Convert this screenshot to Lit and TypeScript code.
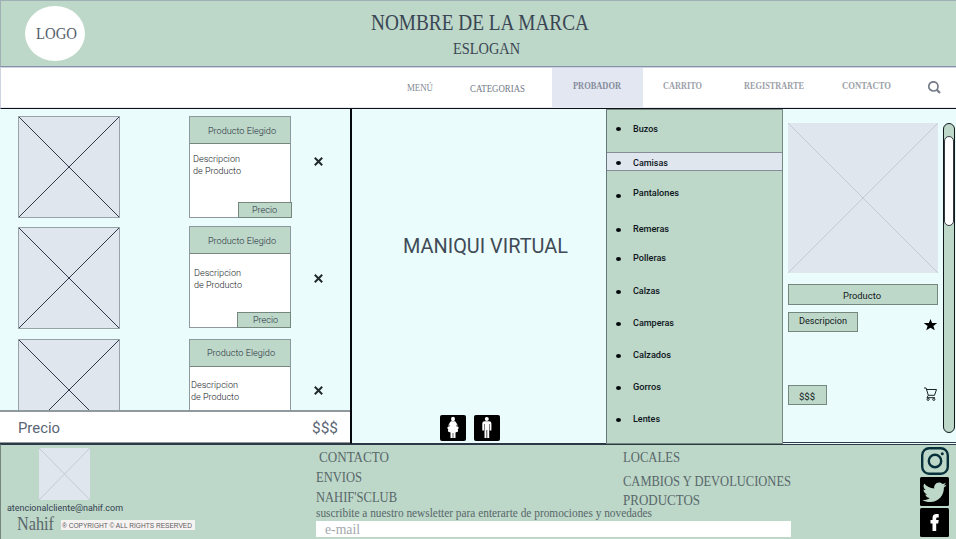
import { LitElement, html, css, svg, nothing } from "lit";
import { customElement, property } from "lit/decorators.js";
import { classMap } from "lit/directives/class-map.js";

/** A single line of text condensed or widened to a given width. */
@customElement("fit-label")
class FitLabel extends LitElement {
  @property({ type: Number }) w = 0;
  static styles = css`
    :host { display: block; flex: none; white-space: nowrap; }
    span { display: inline-block; transform-origin: 0 50%; }
  `;
  render() {
    return html`<span><slot></slot></span>`;
  }
  firstUpdated() {
    this.style.width = `${this.w}px`;
    const span = this.renderRoot.querySelector("span") as HTMLElement;
    const natural = span.getBoundingClientRect().width;
    if (natural) span.style.transform = `scaleX(${this.w / natural})`;
  }
}

/** Crossed placeholder picture. */
@customElement("image-slot")
class ImageSlot extends LitElement {
  static styles = css`
    :host { display: block; box-sizing: border-box; background: #dfe6ee; color: #2e3848; }
    svg { display: block; width: 100%; height: 100%; }
    line { stroke: currentColor; stroke-width: 1; vector-effect: non-scaling-stroke; }
  `;
  render() {
    return html`<svg viewBox="0 0 100 100" preserveAspectRatio="none">
      <line x1="0" y1="0" x2="100" y2="100"></line>
      <line x1="100" y1="0" x2="0" y2="100"></line>
    </svg>`;
  }
}

const nav = [
  { text: "MENÚ", w: 26, cls: "menu" },
  { text: "CATEGORIAS", w: 55, cls: "cats" },
  { text: "PROBADOR", w: 48, cls: "tab" },
  { text: "CARRITO", w: 39, cls: "cart" },
  { text: "REGISTRARTE", w: 60, cls: "reg" },
  { text: "CONTACTO", w: 49, cls: "contact" },
];

const categories = [
  ["Buzos", 25], ["Camisas", 35], ["Pantalones", 46], ["Remeras", 36], ["Polleras", 33],
  ["Calzas", 27], ["Camperas", 41], ["Calzados", 38], ["Gorros", 28], ["Lentes", 27],
] as const;

const search = svg`<circle cx="5.4" cy="5.4" r="4.6" fill="none" stroke="#737c88" stroke-width="1.7"/><path d="M8.7 8.8L12 12" stroke="#737c88" stroke-width="2.2"/>`;

@customElement("app-root")
class AppRoot extends LitElement {
  static styles = css`
    :host {
      display: flex; flex-direction: column; width: 956px; height: 539px; overflow: hidden;
      font-family: "Roboto", sans-serif; color: #2f3b49; background: #fff;
    }
    * { box-sizing: border-box; }
    svg { display: block; flex: none; }
    .serif { font-family: "Liberation Serif", serif; }

    header {
      height: 67px; flex: none; display: grid; grid-template-columns: 370px 218px 1fr;
      background: #bdd7c8; border-top: 1px solid #9fb0b4; border-bottom: 1px solid #8593a8;
      border-left: 1px solid #9fb0b4;
    }
    .logo {
      width: 60px; height: 55px; margin: 5px 0 0 24px; border-radius: 50%; background: #fff;
      display: flex; align-items: center; justify-content: center; font-size: 16px; padding-left: 2px;
      color: #555e6b;
    }
    .brand { padding-top: 8px; color: #3a4654; }
    .brand .name { font-size: 22.5px; line-height: 27px; }
    .brand .slogan { font-size: 16.5px; line-height: 24px; margin: 1px 0 0 82px; }

    nav {
      height: 42px; flex: none; display: flex; align-items: flex-start; padding-left: 406px;
      border-top: 1px solid #cdd3e0; border-left: 1px solid #cdd3e0; border-bottom: 1px solid #0c1018;
      background: linear-gradient(#fff 39px, #e8eaf1 39px);
      font-size: 11px; line-height: 16px; color: #858c96;
    }
    .navitem { padding-top: 9px; }
    .navitem.menu { padding-top: 11px; }
    .navitem.cats { padding-top: 12px; margin-left: 37px; color: #727986; }
    .navitem.tab {
      margin-left: 27px; width: 91px; height: 39px; background: #e3e7f1; padding-left: 21px;
      font-weight: bold; color: #858c9c;
    }
    .navitem.cart { margin-left: 20px; font-weight: bold; color: #9ba0a8; }
    .navitem.reg { margin-left: 42px; font-weight: bold; color: #9ba0a8; }
    .navitem.contact { margin-left: 38px; font-weight: bold; color: #9ba0a8; }
    .search { margin: 13px 0 0 37px; }

    main { height: 335px; flex: none; display: grid; grid-template-columns: 352px 254px 177px 173px; background: #eafcfb; }

    .chosen { border-right: 2px solid #05080c; border-bottom: 1px solid #2d3846; height: 335px; display: flex; flex-direction: column; }
    .items { height: 301px; overflow: hidden; padding-left: 18px; }
    .item { display: flex; align-items: flex-start; height: 102px; margin-top: 9px; }
    .item.first { margin-top: 7px; }
    .item.last { margin-top: 10px; }
    .item image-slot { width: 102px; height: 102px; border: 1px solid #97a3a8; }
    .card { width: 102px; height: 102px; margin-left: 69px; background: #fff; border: 1px solid #8d989f; font-size: 9.5px; }
    .second .card { margin-top: -1px; }
    .cardhead { height: 27px; background: #bdd7c8; border-bottom: 1px solid #75877f; padding: 6px 0 0 18px; line-height: 15px; }
    .last .cardhead { padding: 5px 0 0 17px; }
    .desc { height: 58px; padding: 9px 0 0 3px; line-height: 12px; font-weight: 300; color: #111820; }
    .second .desc { padding: 13px 0 0 4px; }
    .last .desc { padding: 12px 0 0 1px; }
    .price { width: 54px; height: 16px; margin-left: 47px; background: #bdd7c8; border: 1px solid #75877f; padding-left: 15px; line-height: 14px; }
    .first .price { margin-left: 48px; padding-left: 13px; }
    .cardhead, .price { font-weight: 300; color: #242e3c; }
    .close { margin: 41px 0 0 23px; }
    .second .close, .last .close { margin-top: 47px; }
    .total {
      height: 33px; background: #fff; border-top: 2px solid #8f9a9e; border-bottom: 1px solid #8f9a9e;
      display: flex; justify-content: space-between; padding: 0 12px 0 18px; font-size: 15.5px; line-height: 32px; color: #5a6575;
    }

    .mannequin { height: 335px; border-bottom: 1px solid #2d3846; display: flex; flex-direction: column; align-items: center; }
    .mannequin .title { margin: 124px 0 0 12px; font-size: 20px; line-height: 26px; color: #3f4a57; }
    .figures { display: flex; gap: 8px; margin: 156px 0 0 -18px; }

    .categories {
      height: 335px; background: #bdd7c8; border: 1px solid #75877f; border-left: 1px solid #66767b; padding-top: 9px;
      display: grid; grid-template-rows: 33px 31.5px 36px 29px 33px 32px 32px 32px 32px 19px;
      font-size: 9px; font-weight: 500; color: #0d141b;
    }
    .category { height: 19px; display: flex; align-items: center; padding-left: 9px; line-height: 19px; }
    .category:first-child fit-label, .category.active fit-label { margin-top: 2px; }
    .category.active { background: #dfe6ee; border: solid #858d98; border-width: 1px 0; padding-top: 1px; }
    .dot { width: 5px; height: 4px; border-radius: 50%; background: #05080c; margin: 1px 12px 0 0; }
    .category.low .dot { margin-top: 5px; }

    .detail { display: grid; grid-template-columns: 150px 13px; column-gap: 5px; padding: 14px 0 0 5px; border-bottom: 1px solid #343c4a; height: 334px; }
    .detail { align-items: start; font-size: 9.5px; color: #111820; }
    .detail image-slot { width: 150px; height: 150px; color: #c3cbd9; }
    .tag { background: #bdd7c8; border: 1px solid #75877f; }
    .product { height: 21px; margin-top: 11px; padding-left: 54px; line-height: 21px; }
    .row { display: flex; justify-content: space-between; align-items: flex-start; }
    .description { width: 70px; height: 20px; margin-top: 7px; padding-left: 10px; line-height: 16px; }
    .star { margin: 14px 0 0; }
    .cost { width: 39px; height: 20px; margin-top: 53px; padding-left: 10px; line-height: 21px; }
    .trolley { margin-top: 55px; }
    .scroll { width: 12px; height: 310px; border: 1px solid #10181c; border-radius: 6px; background: #bdd7c8; padding-top: 12px; }
    .thumb { width: 10px; height: 90px; border: 1px solid #353a42; border-radius: 5px; background: #fff; }

    footer {
      height: 95px; flex: none; background: #bdd7c8; border-top: 1px solid #2d3846; border-left: 1px solid #75877f;
      display: grid; grid-template-columns: 315px 306px 298px 36px; color: #58676a;
    }
    .about image-slot { width: 51px; height: 52px; margin: 3px 0 0 38px; color: #c3cbd9; border-radius: 2px; }
    .mail { margin: 2px 0 0 6px; font-size: 9.5px; line-height: 12px; color: #344150; }
    .legal { display: flex; align-items: center; margin: 1px 0 0 16px; }
    .owner { font-size: 18px; line-height: 18px; }
    .rights { margin: 2px 0 0 7px; width: 134px; height: 10px; padding-left: 1px; background: #f6f4f3; font-family: "Liberation Sans", sans-serif; font-size: 7px; line-height: 11px; color: #5f5a60; }
    .links { font-size: 14px; line-height: 20px; padding-top: 3px; }
    .links .indent { margin-left: 3px; }
    .links.right { display: grid; grid-template-rows: 24px 19px 20px; align-content: start; padding-left: 1px; }
    .news { font-size: 11.5px; line-height: 12px; margin-top: -1px; }
    .field { width: 475px; height: 16px; margin-top: 2px; padding-left: 9px; background: #fff; color: #a2a8ac; font-size: 14.5px; line-height: 17px; }
    .social { display: flex; flex-direction: column; gap: 2px; padding-top: 1px; }
  `;

  private item(cls: string) {
    return html`<div class="item ${cls}">
      <image-slot></image-slot>
      <div class="card">
        <div class="cardhead"><fit-label w="68">Producto Elegido</fit-label></div>
        <div class="desc"><fit-label w="47">Descripcion</fit-label><fit-label w="48">de Producto</fit-label></div>
        ${cls === "last" ? nothing : html`<div class="price"><fit-label w="25">Precio</fit-label></div>`}
      </div>
      <svg class="close" width="9" height="9" viewBox="0 0 9 9"><path d="M.8 .8L8.2 8.2M8.2 .8L.8 8.2" stroke="#20292e" stroke-width="2"/></svg>
    </div>`;
  }

  render() {
    return html`
      <header class="serif">
        <div class="logo"><fit-label w="41">LOGO</fit-label></div>
        <div class="brand">
          <fit-label class="name" w="218">NOMBRE DE LA MARCA</fit-label>
          <fit-label class="slogan" w="67">ESLOGAN</fit-label>
        </div>
      </header>
      <nav class="serif">
        ${nav.map((n) => html`<div class="navitem ${n.cls}"><fit-label w=${n.w}>${n.text}</fit-label></div>`)}
        <svg class="search" width="13" height="13" viewBox="0 0 13 13">${search}</svg>
      </nav>
      <main>
        <section class="chosen">
          <div class="items">${["first", "second", "last"].map((c) => this.item(c))}</div>
          <div class="total"><fit-label w="42">Precio</fit-label><fit-label w="26">$$$</fit-label></div>
        </section>
        <section class="mannequin">
          <fit-label class="title" w="165">MANIQUI VIRTUAL</fit-label>
          <div class="figures">
            <svg width="26" height="26" viewBox="0 0 26 26"><rect width="26" height="26" rx="2"/><g fill="#fff"><ellipse cx="13" cy="4" rx="2" ry="2.2"/><path d="M10.800 6.200h4.400l2 3 .4 2 1.200 1.600-1 1.800 .3 1.900-2.600 1V23h-5V17.500l-2.600-1 .3-1.900-1-1.800 1.200-1.600.4-2Z"/></g><path d="M9.500 9.800l-.8 2.200M16.500 9.800l.8 2.200M13 18v5" stroke="#000" stroke-width=".6"/></svg>
            <svg width="26" height="26" viewBox="0 0 26 26"><rect width="26" height="26" rx="2"/><g fill="#fff"><circle cx="12.800" cy="3.900" r="2"/><path d="M10.500 6.300h4.600q2.300 0 2.300 2.300v7h-1.700V9h-.5v14h-2v-8h-.7v8h-2V9H10v6.600H8.300v-7q0-2.300 2.200-2.300Z"/></g></svg>
          </div>
        </section>
        <section class="categories">
          ${categories.map(
            ([name, w], i) => html`<div class=${classMap({ category: true, active: i === 1, low: i === 2 })}>
              <span class="dot"></span><fit-label w=${w}>${name}</fit-label>
            </div>`
          )}
        </section>
        <section class="detail">
          <div>
            <image-slot></image-slot>
            <div class="tag product"><fit-label w="38">Producto</fit-label></div>
            <div class="row">
              <div class="tag description"><fit-label w="48">Descripcion</fit-label></div>
              <svg class="star" width="14" height="12" viewBox="0 0 14 12"><path d="M6.500 0L8.100 4.100H13.200L9.400 7 10.800 11.200 6.500 8.700 2.200 11.200 3.600 7-.2 4.100H4.900Z"/></svg>
            </div>
            <div class="row">
              <div class="tag cost"><fit-label w="16">$$$</fit-label></div>
              <svg class="trolley" width="14" height="15" viewBox="0.500 0.500 14 15" fill="none" stroke="#1a2226"><path d="M.5 1.500H2.600L4.800 8.800H11L13 3H3.200M4.800 8.800L3.500 11.200H11.500"/><circle cx="4.600" cy="12.800" r="1.100"/><circle cx="10.300" cy="12.800" r="1.100"/></svg>
            </div>
          </div>
          <div class="scroll"><div class="thumb"></div></div>
        </section>
      </main>
      <footer>
        <section class="about">
          <image-slot></image-slot>
          <fit-label class="mail" w="116">atencionalcliente@nahif.com</fit-label>
          <div class="legal">
            <fit-label class="owner serif" w="37">Nahif</fit-label>
            <div class="rights"><fit-label w="130">® COPYRIGHT © ALL RIGHTS RESERVED</fit-label></div>
          </div>
        </section>
        <section class="serif">
          <div class="links">
            <fit-label class="indent" w="70">CONTACTO</fit-label>
            <fit-label w="46">ENVIOS</fit-label>
            <fit-label w="81">NAHIF'SCLUB</fit-label>
          </div>
          <fit-label class="news" w="336">suscribite a nuestro newsletter para enterarte de promociones y novedades</fit-label>
          <div class="field"><fit-label w="35">e-mail</fit-label></div>
        </section>
        <section class="links right serif">
          <fit-label w="57">LOCALES</fit-label>
          <fit-label w="168">CAMBIOS Y DEVOLUCIONES</fit-label>
          <fit-label w="77">PRODUCTOS</fit-label>
        </section>
        <section class="social">
          <svg width="29" height="29" viewBox="0 0 29 29" fill="none" stroke="#07303a" stroke-width="2.400"><rect x="2.200" y="2.200" width="25.600" height="25.600" rx="7"/><circle cx="15" cy="15" r="6.200"/><circle cx="22.300" cy="7.700" r="1.500" fill="#07303a" stroke="none"/></svg>
          <svg width="29" height="29" viewBox="0 0 29 29"><rect width="29" height="29" rx="1.500"/><path transform="translate(2.800 2.800)" fill="#bdd7c8" d="M23.600 4.900c-.9.400-1.800.7-2.800.8 1-.6 1.800-1.600 2.200-2.700-1 .6-2 1-3.100 1.200-.9-1-2.200-1.600-3.600-1.600-3.200 0-5.500 3-4.800 6C7.400 8.500 3.800 6.600 1.400 3.700.1 5.900.7 8.800 2.900 10.300c-.8 0-1.600-.2-2.200-.6-.1 2.300 1.600 4.400 3.900 4.900-.7.200-1.500.2-2.200.1.600 2 2.400 3.400 4.600 3.400C4.900 19.700 2.300 20.400-.3 20.100c2.200 1.400 4.700 2.200 7.500 2.200 9.100 0 14.200-7.700 13.900-14.600 1-.7 1.800-1.600 2.500-2.600z"/></svg>
          <svg width="29" height="29" viewBox="0 0 29 29"><rect width="29" height="29" rx="1.500"/><path fill="#fff" d="M12.500 23V15.500H10.500V12H12.500V10Q12.500 6 16.500 6H18.700V9.500H17.200Q16.200 9.500 16.200 10.700V12H18.700L18.200 15.500H16.200V23Z"/></svg>
        </section>
      </footer>
    `;
  }
}
